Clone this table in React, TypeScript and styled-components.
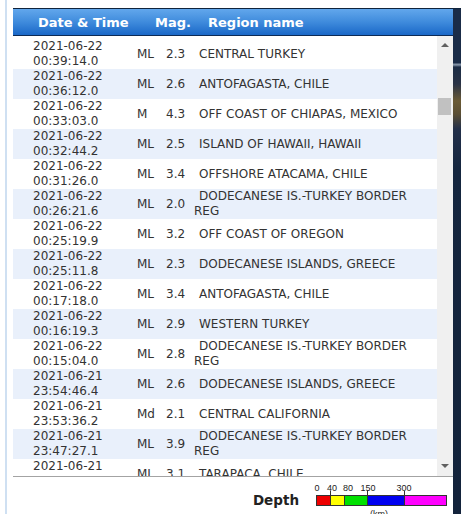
import React from "react";
import styled, { createGlobalStyle } from "styled-components";

const GlobalStyle = createGlobalStyle`
  html, body { margin: 0; padding: 0; background: #ffffff; overflow: hidden; }
  body { font-family: "DejaVu Sans", Verdana, sans-serif; }
`;

const Page = styled.div`
  display: flex;
  width: 461px;
  height: 514px;
  background: #ffffff;
`;

const Gutter = styled.div`
  width: 13px;
  flex: none;
  display: flex;
  padding-left: 5px;
  box-sizing: border-box;
`;

const GutterLine = styled.div`
  width: 2px;
  background: #cfe0f2;
`;

const Content = styled.div`
  display: flex;
  flex: 1;
  min-width: 0;
  padding-top: 8px;
`;

const Panel = styled.div`
  width: 440px;
  flex: none;
  display: flex;
  flex-direction: column;
  background: #ffffff;
`;

const Backdrop = styled.div`
  flex: 1;
  border-top: 1px solid #10243d;
  background: linear-gradient(
    to bottom,
    #1a2c48 0px,
    #1a2c48 54px,
    #8090a4 55px,
    #8090a4 56px,
    #1c2d46 58px,
    #2a3346 75px,
    #6a5a35 92px,
    #5a4e34 105px,
    #23304a 120px,
    #15263f 160px,
    #13233b 100%
  );
`;

const HeaderBar = styled.div`
  height: 26px;
  border-top: 1px solid #10243d;
  border-bottom: 1px solid #0c2a55;
  background: linear-gradient(to bottom, #62a7ec 0%, #3f8bdc 50%, #1a68c8 100%);
  display: grid;
  grid-template-columns: 142px 53px 1fr;
  align-items: center;
  color: #ffffff;
  font-family: "DejaVu Sans", Verdana, sans-serif;
  font-weight: bold;
  font-size: 13px;
`;

const HeaderCell = styled.div<{ $pad?: number }>`
  padding-left: ${(p) => p.$pad ?? 0}px;
  white-space: nowrap;
`;

const ListArea = styled.div`
  display: flex;
  height: 440px;
`;

const Rows = styled.div`
  flex: 1;
  overflow: hidden;
  padding-top: 3px;
`;

const Row = styled.div<{ $alt: boolean }>`
  display: grid;
  grid-template-columns: 124px 29px 28px 1fr;
  height: 30px;
  align-items: center;
  background: ${(p) => (p.$alt ? "#e9f0fb" : "#ffffff")};
  font-family: "DejaVu Sans", Verdana, sans-serif;
  font-size: 12px;
  line-height: 15px;
  color: #333333;
`;

const DateCell = styled.div`
  padding-left: 20px;
  white-space: nowrap;
`;

const MagCell = styled.div`
  white-space: nowrap;
`;

const RegionCell = styled.div`
  text-indent: 5px;
  padding-right: 10px;
`;

const Scrollbar = styled.div`
  width: 16px;
  flex: none;
  background: #f0f0f0;
  display: flex;
  flex-direction: column;
`;

const ArrowButton = styled.div<{ $h: number }>`
  height: ${(p) => p.$h}px;
  flex: none;
  display: flex;
  align-items: center;
  justify-content: center;
`;

const Triangle = styled.div<{ $down?: boolean }>`
  width: 0;
  height: 0;
  border-left: 4px solid transparent;
  border-right: 4px solid transparent;
  ${(p) =>
    p.$down ? "border-top: 4px solid #606060;" : "border-bottom: 4px solid #606060;"}
`;

const Track = styled.div`
  flex: 1;
  padding: 0 2px 0 1px;
`;

const Thumb = styled.div<{ $offset: number }>`
  margin-top: ${(p) => p.$offset}px;
  height: 17px;
  background: #c1c1c1;
`;

const Footer = styled.div`
  flex: 1;
  border-top: 1px solid #a3a3a3;
  display: flex;
  justify-content: flex-end;
  align-items: flex-start;
  padding-right: 2px;
`;

const DepthLabel = styled.div`
  margin-top: 15px;
  margin-right: 12px;
  font-family: "DejaVu Sans", Verdana, sans-serif;
  font-weight: bold;
  font-size: 13.5px;
  line-height: 16px;
  color: #222222;
`;

type Quake = {
  date: string;
  time: string;
  type: string;
  mag: string;
  region: string;
};

const quakes: Quake[] = [
  { date: "2021-06-22", time: "00:39:14.0", type: "ML", mag: "2.3", region: "CENTRAL TURKEY" },
  { date: "2021-06-22", time: "00:36:12.0", type: "ML", mag: "2.6", region: "ANTOFAGASTA, CHILE" },
  { date: "2021-06-22", time: "00:33:03.0", type: "M", mag: "4.3", region: "OFF COAST OF CHIAPAS, MEXICO" },
  { date: "2021-06-22", time: "00:32:44.2", type: "ML", mag: "2.5", region: "ISLAND OF HAWAII, HAWAII" },
  { date: "2021-06-22", time: "00:31:26.0", type: "ML", mag: "3.4", region: "OFFSHORE ATACAMA, CHILE" },
  { date: "2021-06-22", time: "00:26:21.6", type: "ML", mag: "2.0", region: "DODECANESE IS.-TURKEY BORDER REG" },
  { date: "2021-06-22", time: "00:25:19.9", type: "ML", mag: "3.2", region: "OFF COAST OF OREGON" },
  { date: "2021-06-22", time: "00:25:11.8", type: "ML", mag: "2.3", region: "DODECANESE ISLANDS, GREECE" },
  { date: "2021-06-22", time: "00:17:18.0", type: "ML", mag: "3.4", region: "ANTOFAGASTA, CHILE" },
  { date: "2021-06-22", time: "00:16:19.3", type: "ML", mag: "2.9", region: "WESTERN TURKEY" },
  { date: "2021-06-22", time: "00:15:04.0", type: "ML", mag: "2.8", region: "DODECANESE IS.-TURKEY BORDER REG" },
  { date: "2021-06-21", time: "23:54:46.4", type: "ML", mag: "2.6", region: "DODECANESE ISLANDS, GREECE" },
  { date: "2021-06-21", time: "23:53:36.2", type: "Md", mag: "2.1", region: "CENTRAL CALIFORNIA" },
  { date: "2021-06-21", time: "23:47:27.1", type: "ML", mag: "3.9", region: "DODECANESE IS.-TURKEY BORDER REG" },
  { date: "2021-06-21", time: "23:44:52.0", type: "ML", mag: "3.1", region: "TARAPACA, CHILE" },
];

const DepthLegend: React.FC = () => (
  <svg width="140" height="37" viewBox="0 0 140 37">
    <g fontFamily="'Liberation Sans', Arial, sans-serif" fontSize="9" fill="#222" textAnchor="middle">
      <text x="6" y="13.5">0</text>
      <text x="21" y="13.5">40</text>
      <text x="37" y="13.5">80</text>
      <text x="57" y="13.5">150</text>
      <text x="93" y="13.5">300</text>
      <text x="68" y="40">(km)</text>
    </g>
    <g stroke="#333" strokeWidth="1">
      <line x1="19.5" y1="14" x2="19.5" y2="18" />
      <line x1="56.5" y1="14" x2="56.5" y2="18" />
      <line x1="93.5" y1="14" x2="93.5" y2="18" />
    </g>
    <rect x="5.5" y="18.5" width="14" height="10" fill="#ee0000" />
    <rect x="19.5" y="18.5" width="14" height="10" fill="#ffff00" />
    <rect x="33.5" y="18.5" width="23" height="10" fill="#00e000" />
    <rect x="56.5" y="18.5" width="37" height="10" fill="#0000f0" />
    <rect x="93.5" y="18.5" width="42" height="10" fill="#ff00ff" />
    <g stroke="#333" strokeWidth="1" fill="none">
      <rect x="5.5" y="18.5" width="130" height="10" />
      <line x1="19.5" y1="18.5" x2="19.5" y2="28.5" />
      <line x1="33.5" y1="18.5" x2="33.5" y2="28.5" />
      <line x1="56.5" y1="18.5" x2="56.5" y2="28.5" />
      <line x1="93.5" y1="18.5" x2="93.5" y2="28.5" />
    </g>
  </svg>
);

export default function App() {
  return (
    <>
      <GlobalStyle />
      <Page>
        <Gutter>
          <GutterLine />
        </Gutter>
        <Content>
          <Panel>
            <HeaderBar>
              <HeaderCell $pad={25}>Date &amp; Time</HeaderCell>
              <HeaderCell>Mag.</HeaderCell>
              <HeaderCell>Region name</HeaderCell>
            </HeaderBar>
            <ListArea>
              <Rows>
                {quakes.map((q, i) => (
                  <Row key={i} $alt={i % 2 === 1}>
                    <DateCell>
                      {q.date}
                      <br />
                      {q.time}
                    </DateCell>
                    <MagCell>{q.type}</MagCell>
                    <MagCell>{q.mag}</MagCell>
                    <RegionCell>{q.region}</RegionCell>
                  </Row>
                ))}
              </Rows>
              <Scrollbar>
                <ArrowButton $h={18}>
                  <Triangle />
                </ArrowButton>
                <Track>
                  <Thumb $offset={44} />
                </Track>
                <ArrowButton $h={20}>
                  <Triangle $down />
                </ArrowButton>
              </Scrollbar>
            </ListArea>
            <Footer>
              <DepthLabel>Depth</DepthLabel>
              <DepthLegend />
            </Footer>
          </Panel>
          <Backdrop />
        </Content>
      </Page>
    </>
  );
}
